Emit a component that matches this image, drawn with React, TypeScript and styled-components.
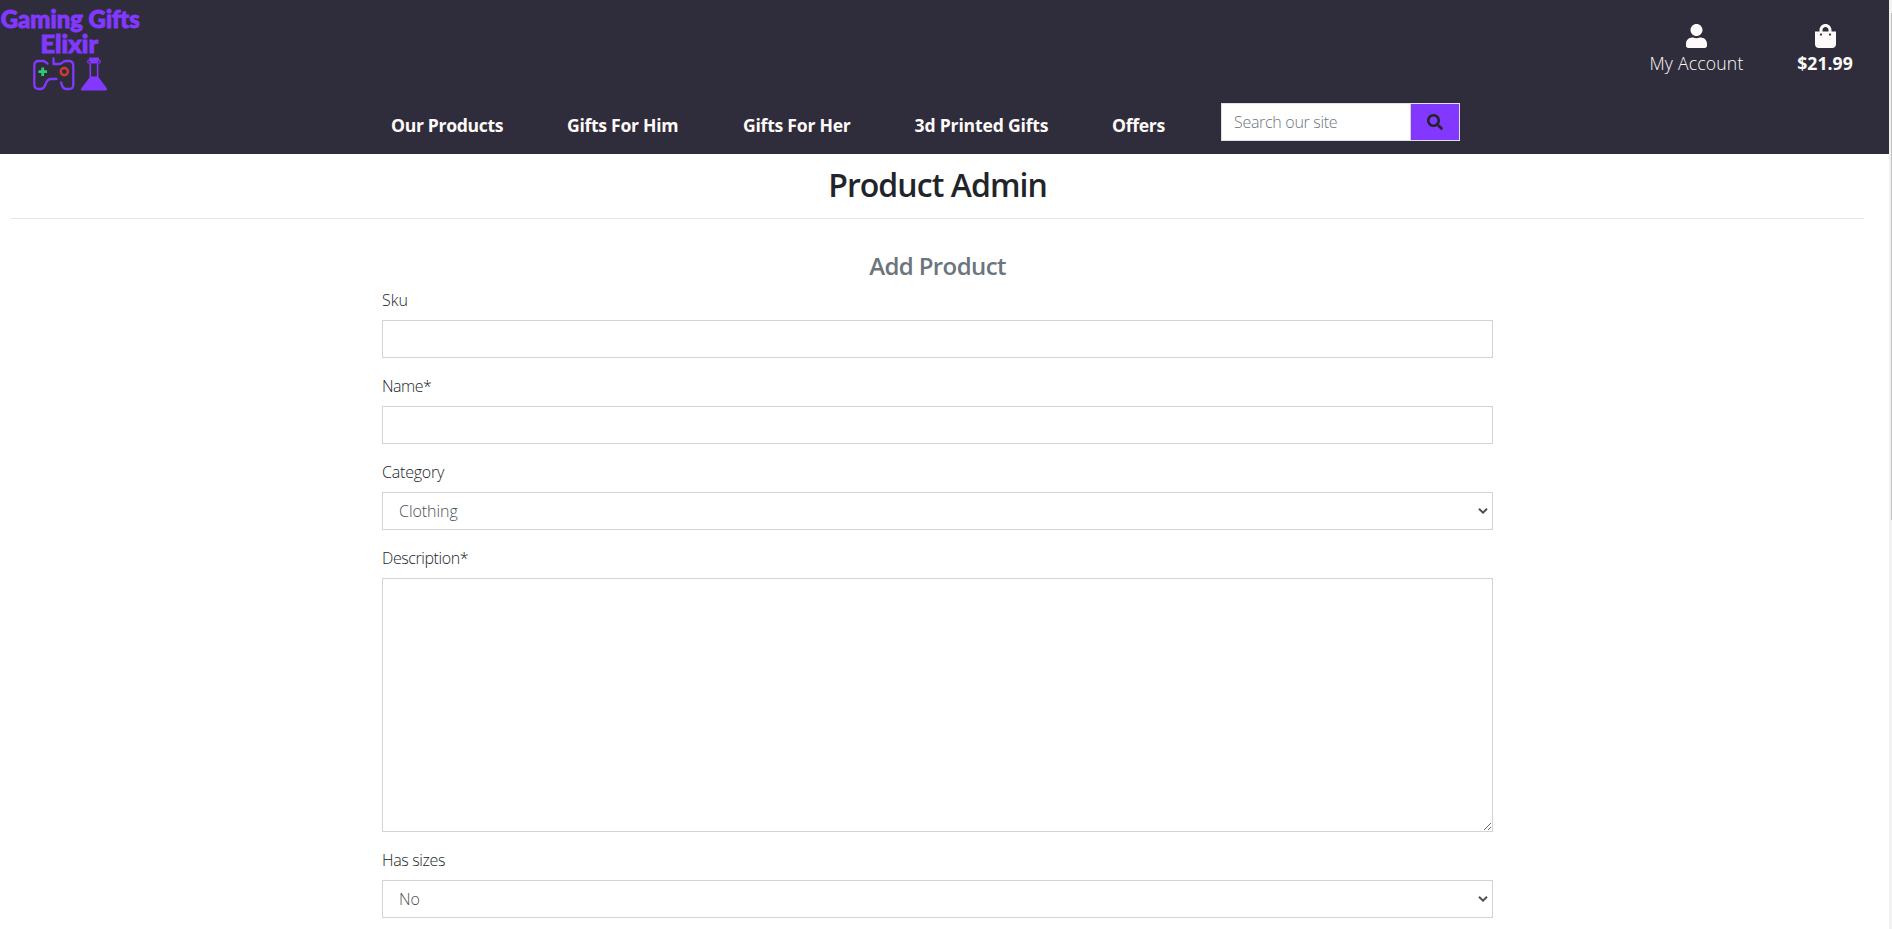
import React from "react";
import styled, { createGlobalStyle } from "styled-components";

const GlobalStyle = createGlobalStyle`
  * { box-sizing: border-box; }
  html, body { margin: 0; height: 929px; overflow: hidden; }
  body {
    background: #fff;
    color: #212529;
    font-family: "Open Sans", "Noto Sans", sans-serif;
    font-size: 16px;
    font-weight: 300;
    line-height: 1.5;
  }
`;

const Screen = styled.div`
  display: flex;
  height: 929px;
  overflow: hidden;
`;

const Page = styled.div`
  flex: 1;
  min-width: 0;
`;

const ScrollTrack = styled.div`
  width: 3px;
  padding: 13px 0 0 2px;
  background: #f1f1f1;
`;

const ScrollThumb = styled.div`
  height: 507px;
  background: #c1c1c1;
`;

const Header = styled.header`
  height: 154px;
  background: #2f2d3b;
  color: #fffafa;
`;

const TopBar = styled.div`
  display: flex;
  justify-content: space-between;
  height: 103px;
`;

const Logo = styled.svg`
  display: block;
  width: 144px;
  height: 96px;
`;

const AccountLinks = styled.div`
  display: flex;
  padding-top: 24px;
`;

const AccountLink = styled.a<{ $width: number; $bold?: boolean; $spacing: number }>`
  display: flex;
  flex-direction: column;
  align-items: center;
  width: ${(p) => p.$width}px;
  font-size: 17.6px;
  font-weight: ${(p) => (p.$bold ? 700 : 300)};
  letter-spacing: ${(p) => p.$spacing}px;
  line-height: 26px;
  white-space: nowrap;

  svg {
    display: block;
    width: 21px;
    height: 24px;
    margin-bottom: 2px;
  }
`;

const NavBar = styled.nav`
  display: flex;
  height: 38px;
  padding-left: 391px;
`;

const NavLink = styled.a<{ $width: number; $spacing: number }>`
  flex: none;
  width: ${(p) => p.$width}px;
  padding-top: 9px;
  font-size: 17.6px;
  font-weight: 700;
  line-height: 26px;
  letter-spacing: ${(p) => p.$spacing}px;
  white-space: nowrap;
`;

const Search = styled.form`
  display: flex;
  flex: none;
  width: 239px;
  height: 38px;
  border: 1px solid #dee2e6;
`;

const SearchInput = styled.input`
  width: 189px;
  padding: 0 12px;
  border: 0;
  border-right: 1px solid #ced4da;
  border-radius: 0;
  background: #fff;
  font: inherit;
  letter-spacing: -0.3px;

  &::placeholder { color: #6c757d; opacity: 1; }
`;

const SearchButton = styled.button`
  display: flex;
  flex: 1;
  align-items: center;
  justify-content: center;
  padding: 0 1px 0 0;
  border: 0;
  background: #8338ff;
`;

const Title = styled.h2`
  margin: 0 14px 0 0;
  padding-top: 12px;
  font-size: 32px;
  font-weight: 600;
  line-height: 38px;
  letter-spacing: -0.95px;
  text-align: center;
`;

const Divider = styled.hr`
  height: 1px;
  margin: 14px 25px 0 11px;
  border: 0;
  background: #e5e5e5;
`;

const Subtitle = styled.h5`
  margin: 32px 0 8px;
  color: #6c757d;
  font-size: 24px;
  font-weight: 600;
  line-height: 29px;
  letter-spacing: -0.6px;
  text-align: center;
`;

const ProductForm = styled.form`
  width: 1111px;
  margin-left: 382px;
`;

const Field = styled.div`
  display: flex;
  flex-direction: column;
  margin-bottom: 16px;
`;

const Label = styled.label<{ $spacing: number }>`
  height: 24px;
  margin-bottom: 8px;
  letter-spacing: ${(p) => p.$spacing}px;
`;

const TextInput = styled.input`
  height: 38px;
  border: 1px solid #ced4da;
  border-radius: 0;
  background: #fff;
`;

const SelectBox = styled.div`
  position: relative;
  height: 38px;
`;

const SelectControl = styled.select`
  width: 100%;
  height: 38px;
  padding: 0 16px;
  border: 1px solid #ced4da;
  border-radius: 0;
  background: #fff;
  color: #495057;
  font: inherit;
  letter-spacing: -0.05px;
  appearance: none;
`;

const SelectArrow = styled.svg`
  position: absolute;
  top: 16px;
  right: 5px;
  width: 10px;
  height: 6px;
  pointer-events: none;
`;

const TextArea = styled.textarea`
  height: 254px;
  border: 1px solid #ced4da;
  border-radius: 0;
  background: #fff;
  resize: vertical;
`;

const navItems = [
  { label: "Our Products", width: 176, spacing: -0.33 },
  { label: "Gifts For Him", width: 176, spacing: -0.3 },
  { label: "Gifts For Her", width: 171.5, spacing: -0.25 },
  { label: "3d Printed Gifts", width: 197.5, spacing: -0.18 },
  { label: "Offers", width: 109, spacing: -0.3 },
];

function BrandLogo() {
  return (
    <Logo viewBox="0 0 144 96" fill="none">
      <g fill="#8338ff" stroke="#8338ff" strokeWidth="0.9" fontFamily="Lato" fontWeight="900" fontSize="24">
        <text x="0.8" y="28.3" textLength="139" lengthAdjust="spacingAndGlyphs">Gaming Gifts</text>
        <text x="40.5" y="52.5" textLength="57.500" lengthAdjust="spacingAndGlyphs">Elixir</text>
      </g>
      <g stroke="#8338ff" strokeWidth="2.3" strokeLinecap="round" strokeLinejoin="round">
        <path d="M47.5 63.5 44 61H38.5Q34.3 61 34.3 65.5V84.500Q34.300 89 39 89H40.500Q43.500 89 45 85.500L46.500 82Q48 79 51 79H56.500" />
        <path d="M53.500 58.500V64H59Q61 64 62.500 62.500 64 61 66 61H68.500Q73.300 61 73.300 65.500V84.500Q73.300 89 69 89H66.500Q63.500 89 62.300 86L61 82.500" />
      </g>
      <path d="M42.700 67.500V76M38.500 71.700H47" stroke="#2ecc71" strokeWidth="2.800" />
      <circle cx="64.300" cy="71.600" r="3.600" stroke="#cf3a36" strokeWidth="2.400" />
      <path d="M90.300 64V77M97.600 64V77" stroke="#8338ff" strokeWidth="1.600" />
      <path d="M89 57.500H99L98.300 63.500H89.700ZM90.300 76.500H98L107 88.500Q107.500 90.600 105.500 90.600H82.500Q80.300 90.600 81.200 88.500Z" fill="#8338ff" />
      <circle cx="89.200" cy="61.700" r="1.500" fill="#2f2d3b" stroke="#8338ff" strokeWidth="1.200" />
      <circle cx="98.800" cy="61.700" r="1.500" fill="#2f2d3b" stroke="#8338ff" strokeWidth="1.200" />
    </Logo>
  );
}

function UserIcon() {
  return (
    <svg viewBox="0 0 448 512" fill="currentColor">
      <path d="M224 256c70.700 0 128-57.300 128-128S294.700 0 224 0 96 57.300 96 128s57.300 128 128 128zm89.600 32h-16.700c-22.200 10.200-46.900 16-72.900 16s-50.600-5.800-72.900-16h-16.700C60.200 288 0 348.200 0 422.400V464c0 26.500 21.500 48 48 48h352c26.500 0 48-21.500 48-48v-41.600c0-74.200-60.200-134.400-134.400-134.400z" />
    </svg>
  );
}

function BagIcon() {
  return (
    <svg viewBox="0 0 448 512" fill="currentColor">
      <path d="M352 160v-32C352 57.420 294.579 0 224 0 153.420 0 96 57.420 96 128v32H0v272c0 44.183 35.817 80 80 80h288c44.183 0 80-35.817 80-80V160h-96zm-192-32c0-35.290 28.710-64 64-64s64 28.710 64 64v32H160v-32zm160 120c-13.255 0-24-10.745-24-24s10.745-24 24-24 24 10.745 24 24-10.745 24-24 24zm-192 0c-13.255 0-24-10.745-24-24s10.745-24 24-24 24 10.745 24 24-10.745 24-24 24z" />
    </svg>
  );
}

function SearchIcon() {
  return (
    <svg width="16" height="16" viewBox="0 0 512 512" fill="#212529">
      <path d="M505 442.700L405.300 343c-4.500-4.500-10.600-7-17-7H372c27.600-35.300 44-79.700 44-128C416 93.100 322.900 0 208 0S0 93.100 0 208s93.100 208 208 208c48.300 0 92.700-16.400 128-44v16.300c0 6.400 2.500 12.500 7 17l99.700 99.700c9.400 9.400 24.600 9.400 33.900 0l28.300-28.300c9.400-9.400 9.400-24.600.1-34zM208 336c-70.700 0-128-57.200-128-128 0-70.700 57.200-128 128-128 70.700 0 128 57.200 128 128 0 70.700-57.200 128-128 128z" />
    </svg>
  );
}

function Select({ value }: { value: string }) {
  return (
    <SelectBox>
      <SelectControl>
        <option>{value}</option>
      </SelectControl>
      <SelectArrow viewBox="0 0 10 6" fill="none" stroke="#495057" strokeWidth="2">
        <path d="M1 0.800 5 4.600 9 0.800" />
      </SelectArrow>
    </SelectBox>
  );
}

export default function App() {
  return (
    <Screen>
      <GlobalStyle />
      <Page>
        <Header>
          <TopBar>
            <BrandLogo />
            <AccountLinks>
              <AccountLink $width={129} $spacing={0.2}>
                <UserIcon />
                My Account
              </AccountLink>
              <AccountLink $width={128} $bold $spacing={0.05}>
                <BagIcon />
                $21.99
              </AccountLink>
            </AccountLinks>
          </TopBar>
          <NavBar>
            {navItems.map((item) => (
              <NavLink key={item.label} $width={item.width} $spacing={item.spacing}>
                {item.label}
              </NavLink>
            ))}
            <Search>
              <SearchInput placeholder="Search our site" />
              <SearchButton type="button" aria-label="Search">
                <SearchIcon />
              </SearchButton>
            </Search>
          </NavBar>
        </Header>
        <Title>Product Admin</Title>
        <Divider />
        <ProductForm>
          <Subtitle>Add Product</Subtitle>
          <Field>
            <Label $spacing={0}>Sku</Label>
            <TextInput />
          </Field>
          <Field>
            <Label $spacing={-0.5}>Name*</Label>
            <TextInput />
          </Field>
          <Field>
            <Label $spacing={-0.2}>Category</Label>
            <Select value="Clothing" />
          </Field>
          <Field>
            <Label $spacing={-0.42}>Description*</Label>
            <TextArea />
          </Field>
          <Field>
            <Label $spacing={-0.35}>Has sizes</Label>
            <Select value="No" />
          </Field>
        </ProductForm>
      </Page>
      <ScrollTrack>
        <ScrollThumb />
      </ScrollTrack>
    </Screen>
  );
}
